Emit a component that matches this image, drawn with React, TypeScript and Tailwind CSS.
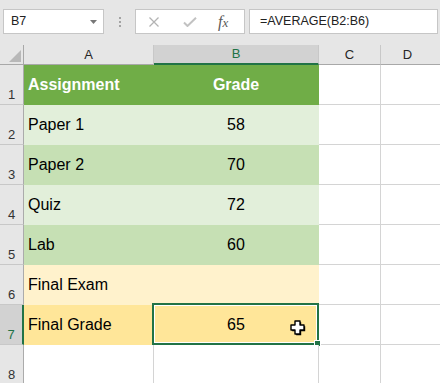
type Row = {
    n: number;
    a: string;
    b: string;
    fill: string;
    head?: boolean;
    selected?: boolean;
};

const rows: Row[] = [
    { n: 1, a: 'Assignment', b: 'Grade', fill: 'bg-[#70ad47] border-[#70ad47]', head: true },
    { n: 2, a: 'Paper 1', b: '58', fill: 'bg-[#e2efda] border-[#e2efda]' },
    { n: 3, a: 'Paper 2', b: '70', fill: 'bg-[#c6e0b4] border-[#c6e0b4]' },
    { n: 4, a: 'Quiz', b: '72', fill: 'bg-[#e2efda] border-[#e2efda]' },
    { n: 5, a: 'Lab', b: '60', fill: 'bg-[#c6e0b4] border-[#c6e0b4]' },
    { n: 6, a: 'Final Exam', b: '', fill: 'bg-[#fff2cc] border-[#fff2cc]' },
    { n: 7, a: 'Final Grade', b: '65', fill: 'bg-[#ffe699] border-[#ffe699]', selected: true },
    { n: 8, a: '', b: '', fill: 'bg-white border-[#d4d4d4]' },
];

function PlusCursor() {
    const d = 'M5 1h5v4h4v5h-4v4H5v-4H1V5h4z';
    return (
        <svg width="17" height="17" viewBox="0 0 17 17" className="absolute left-[136px] top-[15px]">
            <path d={d} transform="translate(1.2 1.2)" fill="#000" />
            <path d={d} fill="#fff" stroke="#000" strokeWidth="1.4" strokeLinejoin="round" />
        </svg>
    );
}

export default function App() {
    return (
        <div className="w-[440px] h-[383px] overflow-hidden bg-white" style={{ fontFamily: '"Liberation Sans", Arial, sans-serif' }}>
            {/* Formula bar */}
            <div className="h-[45px] bg-[#e6e6e6] flex items-start">
                <div className="ml-[3px] mt-[9px] w-[101px] h-[25px] border border-[#c6c6c6] bg-white flex items-center pl-[7px] pr-[6px] justify-between">
                    <span className="text-[12.5px] text-[#222]">B7</span>
                    <svg width="7" height="4" viewBox="0 0 7 4">
                        <path d="M0 0h7L3.5 4z" fill="#777" />
                    </svg>
                </div>
                <div className="ml-[15px] mt-[17px] flex flex-col gap-[2px]">
                    <span className="w-[2px] h-[2px] bg-[#a3a3a3]" />
                    <span className="w-[2px] h-[2px] bg-[#a3a3a3]" />
                    <span className="w-[2px] h-[2px] bg-[#a3a3a3]" />
                </div>
                <div className="ml-[14px] mt-[9px] w-[110px] h-[25px] border border-[#c6c6c6] bg-white flex items-center">
                    <svg width="12" height="10" viewBox="0 0 12 10" className="ml-[12px]">
                        <path d="M1.5 0.5l9 9M10.5 0.5l-9 9" stroke="#b3b3b3" strokeWidth="1.3" />
                    </svg>
                    <svg width="14" height="10" viewBox="0 0 14 10" className="ml-[23px]">
                        <path d="M1 5.5l3.5 3.5L13 0.8" stroke="#c2c2c2" strokeWidth="2" fill="none" />
                    </svg>
                    <span className="ml-[21px] text-[16px] italic text-[#5a5a5a] leading-none" style={{ fontFamily: '"Liberation Serif", serif' }}>
                        f<span className="text-[13px]">x</span>
                    </span>
                </div>
                <div className="ml-[4px] mt-[9px] w-[189px] h-[25px] border border-[#c6c6c6] bg-white flex items-center pl-[10px]">
                    <span className="text-[12.5px] text-[#222]">=AVERAGE(B2:B6)</span>
                </div>
            </div>

            {/* Column headers */}
            <div className="flex h-[20px] bg-[#e6e6e6] text-[13px] text-[#262626]">
                <div className="w-[24px] shrink-0 border-r border-b border-[#a8a8a8] relative">
                    <svg width="12" height="12" viewBox="0 0 12 12" className="absolute right-[2px] bottom-[2px]">
                        <path d="M12 0v12H0z" fill="#b8b8b8" />
                    </svg>
                </div>
                <div className="w-[130px] shrink-0 border-r border-r-[#c8c8c8] border-b border-b-[#a8a8a8] flex items-center justify-center">A</div>
                <div className="w-[165px] shrink-0 bg-[#d2d2d2] border-r border-r-[#c8c8c8] border-b-2 border-b-[#217346] flex items-center justify-center text-[#217346]">B</div>
                <div className="w-[62px] shrink-0 border-r border-r-[#c8c8c8] border-b border-b-[#a8a8a8] flex items-center justify-center">C</div>
                <div className="flex-1 border-b border-b-[#a8a8a8] flex items-center justify-center pr-[6px]">D</div>
            </div>

            {/* Rows */}
            {rows.map((row) => (
                <div key={row.n} className="flex h-[40px] text-[16px] text-black">
                    <div
                        className={
                            row.selected
                                ? 'w-[24px] shrink-0 bg-[#d2d2d2] border-r-2 border-r-[#217346] border-b border-b-[#c8c8c8] flex items-end justify-center pb-[2px] text-[13px] leading-[15px] text-[#217346]'
                                : 'w-[24px] shrink-0 bg-[#e6e6e6] border-r border-r-[#ababab] border-b border-b-[#c8c8c8] flex items-end justify-center pb-[2px] text-[13px] leading-[15px] text-[#333]'
                        }
                    >
                        {row.n}
                    </div>
                    <div className={`w-[130px] shrink-0 border-r border-b flex items-center pl-[4px] ${row.fill} ${row.head ? 'font-bold text-white' : ''}`}>
                        {row.a}
                    </div>
                    <div className={`relative w-[165px] shrink-0 border-r border-b flex items-center justify-center ${row.fill} ${row.head ? 'font-bold text-white' : ''}`}>
                        {row.b}
                        {row.selected && (
                            <>
                                <div className="absolute -top-[2px] -left-[2px] -right-[1px] -bottom-[1px] border-2 border-[#217346] shadow-[inset_0_0_0_1px_#ffffff]" />
                                <div className="absolute -right-[3px] -bottom-[3px] w-[7px] h-[7px] bg-[#217346] border border-white" />
                                <PlusCursor />
                            </>
                        )}
                    </div>
                    <div className="w-[62px] shrink-0 border-r border-b border-[#d4d4d4]" />
                    <div className="flex-1 border-b border-[#d4d4d4]" />
                </div>
            ))}
        </div>
    );
}
